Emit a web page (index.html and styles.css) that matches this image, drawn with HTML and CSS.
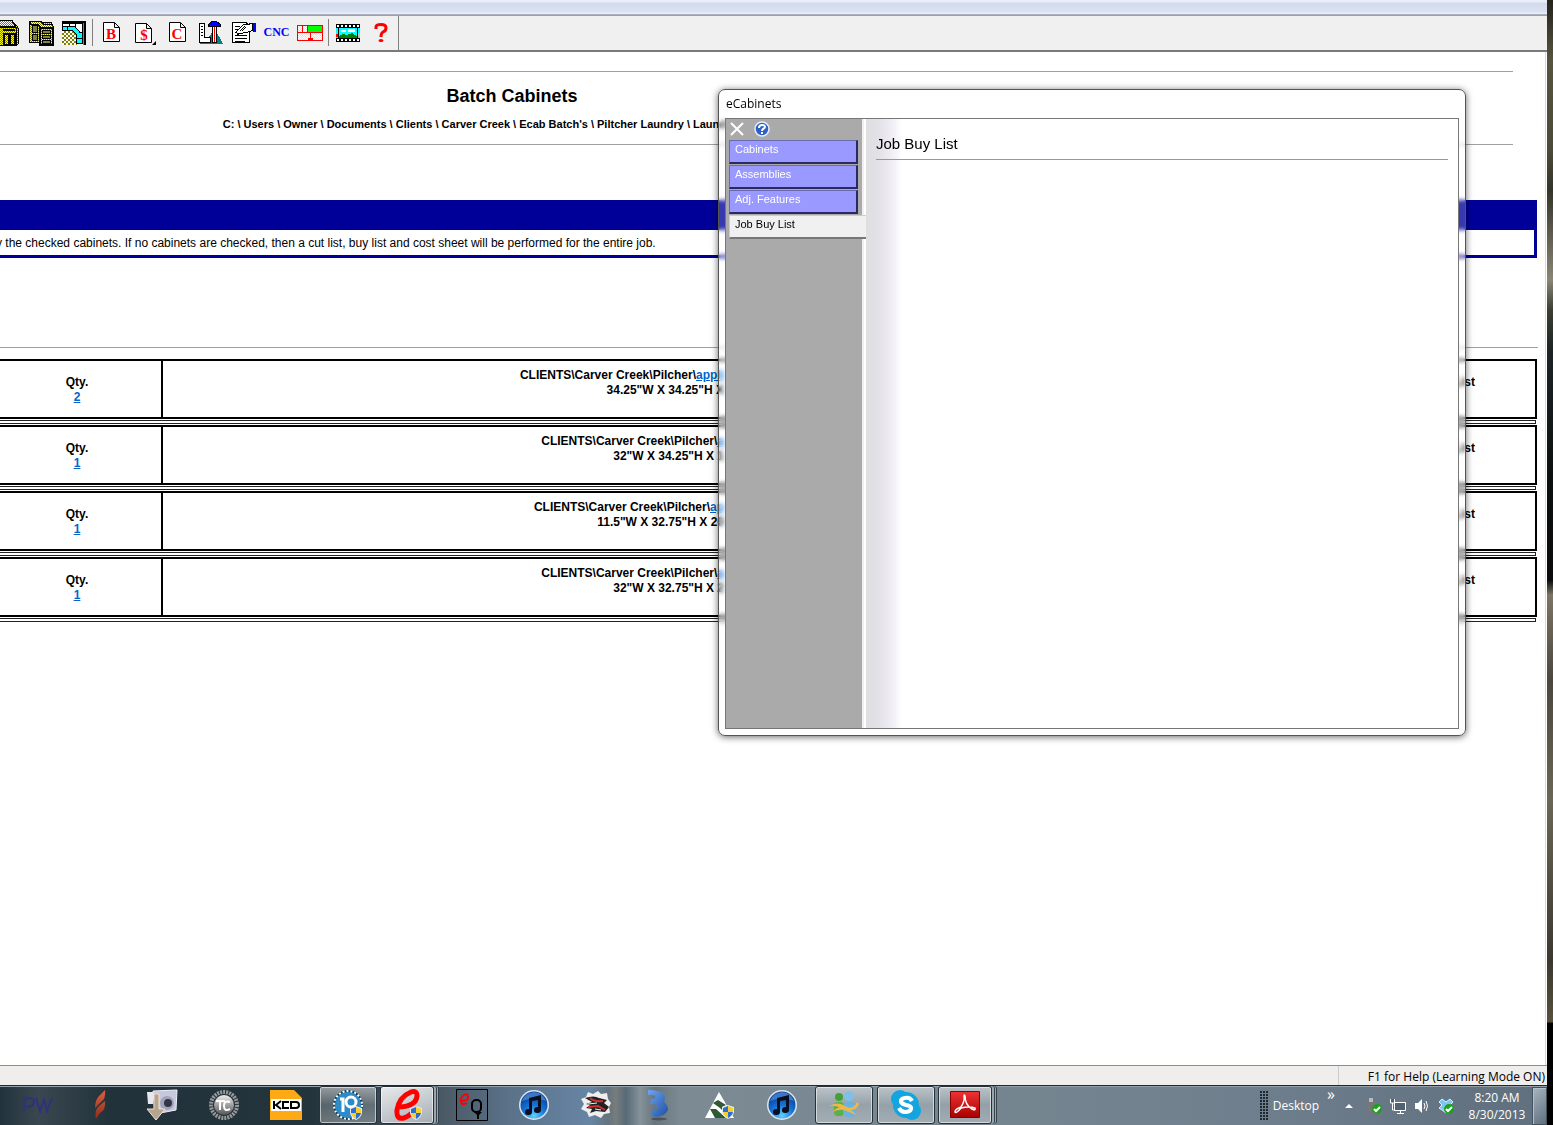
FILE: index.html
```html
<!DOCTYPE html>
<html lang="en">
<head>
<meta charset="utf-8">
<title>Batch Cabinets</title>
<link rel="stylesheet" href="styles.css">
</head>
<body>
<svg class="defs" width="0" height="0" aria-hidden="true">
  <defs>
    <pattern id="yellow" width="2" height="2" patternUnits="userSpaceOnUse"><path fill="#ff0" d="M0 0h2v2H0z"/><path fill="#808000" d="M0 0h1v1H0zM1 1h1v1H1z"/></pattern>
    <pattern id="pale" width="2" height="2" patternUnits="userSpaceOnUse"><path fill="#fff" d="M0 0h2v2H0z"/><path fill="#808000" d="M0 0h1v1H0zM1 1h1v1H1z"/></pattern>
    <pattern id="cream" width="2" height="2" patternUnits="userSpaceOnUse"><path fill="#fff" d="M0 0h2v2H0z"/><path fill="#ff0" d="M0 0h1v1H0zM1 1h1v1H1z"/></pattern>
    <pattern id="floor" width="4" height="4" patternUnits="userSpaceOnUse"><path fill="#fff" d="M0 0h4v4H0z"/><path fill="#808000" d="M0 0h2v2H0zM2 2h2v2H2z"/></pattern>
    <radialGradient id="note" cx=".5" cy=".9" r=".8"><stop offset="0" stop-color="#5fd0ff"/><stop offset=".5" stop-color="#1675d8"/><stop offset="1" stop-color="#0b3f91"/></radialGradient>
    <linearGradient id="steel" x2="0" y2="1"><stop offset="0" stop-color="#eee"/><stop offset="1" stop-color="#555"/></linearGradient>
    <linearGradient id="flame" x2="0" y2="1"><stop offset="0" stop-color="#e0603f"/><stop offset="1" stop-color="#8c2d1c"/></linearGradient>
    <linearGradient id="blue3" x2="1" y2="1"><stop offset="0" stop-color="#6ea6f0"/><stop offset="1" stop-color="#1d4fa5"/></linearGradient>
    <linearGradient id="pdf" x2="0" y2="1"><stop offset="0" stop-color="#e33"/><stop offset="1" stop-color="#a00"/></linearGradient>
    <symbol id="shield" viewBox="0 0 14 14"><path fill="#e8e8e8" d="M7 0l6 2v5q-1 5-6 7Q2 12 1 7V2z"/><path fill="#2d6fd0" d="M7 1v6H2V3zM7 7h5q-1 4-5 6z"/><path fill="#f7cf2b" d="M7 1l5 2v4H7zM2 7h5v6Q3 11 2 7z"/></symbol>
    <symbol id="itunes" viewBox="0 0 32 32"><circle cx="16" cy="16" r="15" fill="#dce6f0"/><circle cx="16" cy="16" r="13.5" fill="url(#note)"/><path fill="#5e9be6" opacity=".6" d="M4 12a12.500 12.500 0 0 1 24 0q-12-5-24 0z"/><path fill="#0a1020" d="M11 9l12-3v15a3.500 3 0 1 1-3-3v-7l-6 1v11a3.500 3 0 1 1-3-3z"/></symbol>
  </defs>
</svg>

<div class="screen">
  <header class="titlebar"></header>
  <nav class="toolbar" aria-label="Tools">
    <div class="group group-first">
      <button class="tool" aria-label="Cabinet"><svg width="26" height="26" shape-rendering="crispEdges"><path fill="url(#pale)" stroke="#000" d="M2 6.500L5 .5h12l5 6z"/><path fill="url(#yellow)" stroke="#000" d="M1.500 7.500h20v18h-20z"/><path fill="url(#yellow)" stroke="#000" d="M21.500 25.500v-18l-5-7 5 5 2 3v15z"/><path fill="none" stroke="#000" stroke-width="2" d="M9 14h5v11H9zM15 14h5v11h-5zM8 10h12"/></svg></button>
      <button class="tool" aria-label="Cabinets"><svg width="26" height="26" shape-rendering="crispEdges"><path fill="url(#yellow)" stroke="#000" d="M1.500 2.500h22v20h-22z"/><path fill="url(#pale)" stroke="#000" d="M2 1.500h11l3 3h8l2 3H13l-3-3H3z"/><path fill="#808040" stroke="#000" d="M4.500 5.500h5v7h-5zM4.500 14.500h5v6h-5z"/><path fill="url(#yellow)" stroke="#000" stroke-width="2" d="M12 8h13v17H12z"/><path fill="#808040" stroke="#000" d="M14.500 10.500h8v3h-8zM14.500 15.500h8v3h-8zM14.500 20.500h8v3h-8z"/></svg></button>
      <button class="tool" aria-label="Room layout"><svg width="24" height="24" shape-rendering="crispEdges"><path fill="url(#floor)" d="M0 9h15v15H0z"/><path fill="#808080" d="M0 0h24v24h-3V3H0z"/><path fill="#fff" stroke="#000" d="M0 2.500h20.500v19H18v-9L13 6H0zM7.500 2v4M13.500 2v4"/><path fill="#0ff" stroke="#000" d="M0 5.500h12.500l5 5v1l3 0v11h-6v-9l-4-4H0zM5.500 6v4M15 17.500h6"/><path fill="none" stroke="#000" stroke-width="2" d="M0 1h23v23"/></svg></button>
    </div>
    <div class="group">
      <button class="tool" aria-label="Buy list"><svg width="18" height="21"><path fill="#fff" stroke="#000" d="M.5.5h11l5 5v14H.5zM11.500.5v5h5"/><text x="8" y="17" class="letter">B</text></svg></button>
      <button class="tool" aria-label="Cost sheet"><svg width="22" height="24"><path fill="#fff" stroke="#000" d="M1.500 2.500h11l5 5v14h-16zM12.500 2.500v5h5"/><text x="10" y="19" class="letter">$</text><path d="M22 20v4h-4z"/></svg></button>
      <button class="tool" aria-label="Cut list"><svg width="18" height="21"><path fill="#fff" stroke="#000" d="M.5.5h11l5 5v14H.5zM11.500.5v5h5"/><text x="8" y="17" class="letter">C</text></svg></button>
      <button class="tool" aria-label="Tools"><svg width="24" height="24" shape-rendering="crispEdges"><path fill="#008080" d="M16 8l8 15H0l9-6z"/><path fill="#fff" stroke="#000" d="M.5 2.500h5v14h6v5H.5zM2 5.500h2M2 8.500h2M2 11.500h2M2 14.500h2"/><path fill="#fff" stroke="#000" d="M13.500 5.500h4v16h-4z"/><path fill="red" d="M15 6h1v15h-1z"/><path fill="#00f" stroke="#000" d="M9.500 3.500l3-3h5l4 3v2h-12z"/></svg></button>
      <button class="tool" aria-label="Properties"><svg width="24" height="23" shape-rendering="crispEdges"><path fill="#fff" stroke="#000" d="M.5 1.500h14l3 6v14H.5z"/><path fill="none" stroke="#000" d="M3 5.500h5M3 8.500h3M3 11.500h2M3 14.500h12M3 17.500h12M3 20.500h10"/><path fill="#fff" stroke="#000" d="M4.500 10.500l7-7h3l6-1v7l-6 2-7 1-2 1zM8 10l5-5M10 10l4-4"/><path fill="#00f" d="M21 2h3v9h-3z"/></svg></button>
      <button class="tool cnc">CNC</button>
      <button class="tool" aria-label="Nesting"><svg width="26" height="18" shape-rendering="crispEdges"><path fill="url(#cream)" stroke="red" d="M.5 1.500h25v15H.5z"/><path fill="#0f0" d="M11 2h14v6H11z"/><path fill="none" stroke="red" d="M0 8.500h26M5.500 2v6M10.500 2v6M13.500 9v6"/><path fill="red" d="M11 14h5v3h-5z"/></svg></button>
    </div>
    <div class="group group-last">
      <button class="tool" aria-label="Render"><svg width="24" height="18" shape-rendering="crispEdges"><path d="M0 0h24v18H0z"/><path fill="#fff" d="M1 1h2v2H1zM5 1h2v2H5zM9 1h2v2H9zM13 1h2v2h-2zM17 1h2v2h-2zM21 1h2v2h-2zM1 15h2v2H1zM5 15h2v2H5zM9 15h2v2H9zM13 15h2v2h-2zM17 15h2v2h-2zM21 15h2v2h-2z"/><path fill="#0ff" d="M0 4h24v10H0z"/><path fill="#fff" d="M5 6h5v2H5zM12 5h7v3h-7z"/><path fill="green" d="M3 12l4-2 4 1 5-2 5 3v2H3z"/><path d="M2 4h1v10H2zM21 4h1v10h-1z"/><path fill="red" d="M0 10h2v3H0z"/><path fill="#c0c0c0" d="M22 9h2v4h-2z"/></svg></button>
      <button class="tool" aria-label="Help"><svg width="14" height="20"><path fill="none" stroke="red" stroke-width="3" d="M2 6V4q0-2.500 5-2.500T12 5q0 3-3 4-2 1-2 5"/><ellipse cx="7" cy="17.500" rx="2.500" ry="1.500" fill="red"/></svg></button>
    </div>
  </nav>

  <main class="document">
    <section class="heading">
      <h1>Batch Cabinets</h1>
      <p class="path">C: \ Users \ Owner \ Documents \ Clients \ Carver Creek \ Ecab Batch's \ Piltcher Laundry \ Laund</p>
    </section>
    <section class="notice">
      <p>y the checked cabinets. If no cabinets are checked, then a cut list, buy list and cost sheet will be performed for the entire job.</p>
    </section>
    <hr>
    <table class="jobs">
      <tr><td class="qty">Qty.<br><a href="#">2</a></td><td class="desc">CLIENTS\Carver Creek\Pilcher\<a href="#">appli</a><br>34.25"W X 34.25"H X</td><td class="list">List</td></tr>
      <tr class="rule"><td colspan="3"><div></div></td></tr>
      <tr><td class="qty">Qty.<br><a href="#">1</a></td><td class="desc">CLIENTS\Carver Creek\Pilcher\<a href="#">a</a><br>32"W X 34.25"H X 1</td><td class="list">List</td></tr>
      <tr class="rule"><td colspan="3"><div></div></td></tr>
      <tr><td class="qty">Qty.<br><a href="#">1</a></td><td class="desc">CLIENTS\Carver Creek\Pilcher\<a href="#">ap</a><br>11.5"W X 32.75"H X 20</td><td class="list">List</td></tr>
      <tr class="rule"><td colspan="3"><div></div></td></tr>
      <tr><td class="qty">Qty.<br><a href="#">1</a></td><td class="desc">CLIENTS\Carver Creek\Pilcher\<a href="#">a</a><br>32"W X 32.75"H X 2</td><td class="list">List</td></tr>
      <tr class="rule"><td colspan="3"><div></div></td></tr>
    </table>
  </main>

  <footer class="status"><span>F1 for Help (Learning Mode ON)</span></footer>

  <nav class="taskbar" aria-label="Taskbar">
    <div class="tasks">
      <button class="task" aria-label="PW"><svg width="32" height="32"><path fill="none" stroke="#30307c" stroke-width="2" d="M2 23V13q0-4 5-4 5 0 5 4 0 5-8 5M14 9l4 13 4-11 3 11 5-13"/></svg></button>
      <button class="task" aria-label="Flame"><svg width="32" height="32"><path fill="url(#flame)" d="M21 1q1 9-4 12l-6 6q0-8 4-12zM21 12q1 9-5 12l-4 6q-2-9 3-13z"/></svg></button>
      <button class="task" aria-label="Pictures"><svg width="32" height="32"><path fill="#c8c8dc" stroke="#eef" d="M7 2l24-1-1 20-21 4z"/><path fill="#e7e7ee" d="M1 3h6v12H2z"/><circle cx="21" cy="14" r="7" fill="#a2a2b8"/><circle cx="22" cy="14" r="4" fill="#333645"/><path fill="#b7a48e" stroke="#eee2d4" d="M8 5h5v15h6l-9 11L1 20h7z"/></svg></button>
      <button class="task" aria-label="TC"><svg width="32" height="32"><circle cx="16" cy="16" r="13" fill="none" stroke="#999" stroke-width="4" stroke-dasharray="2 1"/><circle cx="16" cy="16" r="10" fill="url(#steel)"/><path fill="none" stroke="#fff" stroke-width="2" d="M8 12h9M12 12v9M22 13q-6-2-6 4t6 3"/></svg></button>
      <button class="task" aria-label="KCD"><svg width="32" height="32"><path fill="#ffa915" d="M0 1h24l8 8v22H0z"/><path fill="#fff" d="M1 10h30v12H1z"/><path fill="none" stroke="#000" stroke-width="2" d="M4 12v8M11 12l-5 4 5 4M19 13h-6v6h6M21 13h5q3 0 3 3t-3 3h-5z"/></svg></button>
      <button class="task open" aria-label="Version 10"><svg width="32" height="32"><circle cx="16" cy="16" r="14" fill="#2d8cc8" stroke="#133d59" stroke-width="2"/><circle cx="16" cy="16" r="14" fill="none" stroke="#fff" stroke-width="2" stroke-dasharray="2 2"/><path fill="none" stroke="#fff" stroke-width="3" d="M8 10h3v13"/><circle cx="19" cy="13" r="5" fill="none" stroke="#fff" stroke-width="3"/><use href="#shield" x="17" y="17" width="14" height="14"/></svg></button>
      <button class="task open current stack" aria-label="eCabinets"><svg width="32" height="32"><path fill="none" stroke="red" stroke-width="5" d="M9 18q16-1 17-11 0-6-6-4Q8 8 6 21q-1 10 7 8 5-2 8-5"/><use href="#shield" x="18" y="17" width="14" height="14"/></svg></button>
      <button class="task" aria-label="eQ"><svg width="32" height="32"><path fill="none" stroke="#000" d="M.5.5h31v31H.5z"/><path fill="none" stroke="red" stroke-width="2" d="M5 12q8 0 7-5-1-3-4-1-4 3-3 7 1 4 6 1"/><rect x="16" y="11" width="9" height="12" rx="4" fill="none" stroke="#000" stroke-width="2"/><path d="M18 23h8l-3 3v4h-2v-4z"/></svg></button>
      <button class="task" aria-label="iTunes"><svg width="32" height="32"><use href="#itunes"/></svg></button>
      <button class="task" aria-label="Cards"><svg width="32" height="32"><path fill="#eee" d="M8 3l5 2 5-3 3 3 6-1 1 6 3 4-2 4 1 6-6 1-3 4-6-3-6 2-2-5-6-3 3-5-3-5 5-2z"/><path fill="#222" d="M5 9q9-3 14 0l8 2-3 3 5 4-4 5-9-1-6 2 2-4-6-1 4-3-4-1 6-2z"/><path fill="none" stroke="#c33" stroke-width="2" d="M10 9q4 4 13 3M8 18l10-1 7 4"/><path stroke="#eee" d="M8 15l9-1M15 20l6 1"/></svg></button>
      <button class="task" aria-label="3D"><svg width="32" height="32"><ellipse cx="17" cy="30" rx="8" ry="1.500" opacity=".3"/><path fill="url(#blue3)" d="M6 1q12 0 16 4 2 4 0 8 4 3 4 8-3 7-15 7l-2-8q6 1 7-1 1-4-8-4l1-5q5 0 4-3-2-2-7-1z"/></svg></button>
      <button class="task" aria-label="Triangle"><svg width="32" height="32"><path fill="#fff" d="M15 3l15 26H1z"/><path fill="#2e5a35" d="M9 14l5-3 8 5-6 3zM6 20l6 0 10 9H11zM13 16h5v5z"/><use href="#shield" x="17" y="16" width="14" height="14"/></svg></button>
      <button class="task" aria-label="Music"><svg width="32" height="32"><use href="#itunes"/></svg></button>
      <button class="task open" aria-label="Messenger"><svg width="32" height="32"><circle cx="11" cy="8" r="4" fill="#46a03a"/><rect x="6" y="13" width="10" height="14" rx="4" fill="#5cb04b"/><circle cx="21" cy="7" r="5" fill="#7fc0e8"/><rect x="15" y="13" width="13" height="15" rx="5" fill="#6ab2e0"/><path fill="#f2b648" d="M1 17q9-5 16 0 8 5 12-4l2 2q-3 7-10 6 5 1 7 5-7-3-12-5-6-1-11 2 4-5 7-4-4-3-11-2z"/></svg></button>
      <button class="task open" aria-label="Skype"><svg width="32" height="32"><circle cx="10" cy="10" r="9" fill="#12a5e0"/><circle cx="22" cy="22" r="9" fill="#12a5e0"/><circle cx="16" cy="16" r="13" fill="#12a5e0"/><path fill="none" stroke="#fff" stroke-width="4" d="M22 12q-2-4-7-3-5 1-4 4 1 2 5 3 6 1 5 4-1 3-6 3-4 0-6-4"/></svg></button>
      <button class="task open stack" aria-label="Reader"><svg width="32" height="32"><path fill="url(#pdf)" stroke="#800" d="M1.500 2.500h29v26h-29z"/><path fill="none" stroke="#fff" stroke-width="1.500" d="M6 23q0-3 6-5 4-6 3-11 0-2 1 0 0 9 7 13 4 2 3-1-6-2-14 0-5 6-6 4z"/></svg></button>
    </div>
    <div class="tray">
      <span class="grip"></span>
      <span class="label">Desktop</span>
      <span class="more">»</span>
      <svg width="8" height="4" class="up"><path fill="#fff" d="M4 0l4 4H0z"/></svg>
      <svg width="16" height="16"><path fill="#bbb" d="M3 0h4v4H3z"/><path fill="#777" d="M1 4h8v8l-3 3H4l-3-3z"/><circle cx="11" cy="11" r="5" fill="#1ea01e"/><path fill="none" stroke="#fff" stroke-width="2" d="M8 11l2 2 4-4"/></svg>
      <svg width="16" height="16"><path fill="#536270" stroke="#fff" d="M4.500 4.500h11v8h-11zM7 15.500h7M10.500 13v3M.5 1v4h4V1M2.500 5v7h2"/></svg>
      <svg width="16" height="16"><path fill="#fff" d="M1 5h3l4-4v14l-4-4H1z"/><path fill="none" stroke="#fff" d="M10 5q2 3 0 6M12 3q3 5 0 10"/></svg>
      <svg width="16" height="16"><path fill="#7cc6f4" stroke="#d8f0ff" d="M4 1l4 3 4-3 3 3-3 3 3 3-3 2-4 3-4-3-3-2 3-3-3-3z"/><circle cx="11" cy="11" r="5" fill="#1ea01e"/><path fill="none" stroke="#fff" stroke-width="2" d="M8 11l2 2 4-4"/></svg>
      <div class="clock"><div>8:20 AM</div><div>8/30/2013</div></div>
      <button class="show-desktop" aria-label="Show desktop"></button>
    </div>
  </nav>

  <section class="dialog" role="dialog" aria-label="eCabinets">
    <header>eCabinets</header>
    <div class="panel">
      <aside>
        <div class="actions">
          <button aria-label="Close"><svg width="14" height="14"><path stroke="#fff" stroke-width="2" d="M1 1l12 12M13 1L1 13"/></svg></button>
          <button aria-label="Help"><svg width="16" height="16"><circle cx="8" cy="8" r="7" fill="#2c62c8" stroke="#e8eefa" stroke-width="1.500"/><path fill="none" stroke="#fff" stroke-width="2" d="M5 7q0-3 3-3t3 2q0 1-2 2-1 1-1 2M8 11v2"/></svg></button>
        </div>
        <button class="tab">Cabinets</button>
        <button class="tab">Assemblies</button>
        <button class="tab">Adj. Features</button>
        <button class="tab active">Job Buy List</button>
      </aside>
      <div class="page"><h2>Job Buy List</h2></div>
    </div>
  </section>
</div>
<div class="wallpaper"></div>
</body>
</html>
```
FILE: styles.css
```css
* { box-sizing: border-box; }
body { margin: 0; display: flex; min-height: 100vh; background: #000; color: #000; font: 12px/15px "Liberation Sans", Arial, sans-serif; }
h1, h2, p { margin: 0; }
button { margin: 0; padding: 0; border: 0; background: none; font: inherit; color: inherit; }
svg { display: block; flex: none; }
a { color: #06c; }
.defs { position: absolute; }

.screen { position: relative; flex: 1; min-width: 0; display: flex; flex-direction: column; overflow: hidden; background: #fff; }
.wallpaper { width: 6px; background: linear-gradient(#25231c, #56543f 60px, #4b4a38 150px, #34342a 190px, #8a8574 280px, #3b3f33 310px, #1c2425 350px, #0c0f10 480px, #090b0c 580px, #7c7464 595px, #4c473d 680px, #6b6555 800px, #3c382e 960px, #57503c 1022px, #000 1023px); }

.titlebar { height: 15px; border-bottom: 1px solid #a9afbb; background: linear-gradient(#e9eef7 2px, #d1d9ec 3px, #dbe2f2 12px, #f2f4f8 14px); }
.toolbar { display: flex; height: 37px; border-top: 1px solid #a0a0a0; border-bottom: 2px solid #7a7a7a; background: #f0f0f0; }
.group { display: flex; align-items: center; margin: 3px 0 4px; padding: 0 2px; border-right: 1px solid #808080; }
.group-first { margin-left: -11px; }
.group-last { margin: 0; padding: 0 1px 0 2px; }
.tool { width: 33px; height: 27px; display: flex; align-items: center; justify-content: center; }
.letter { fill: red; font: bold 15px "Liberation Serif", serif; text-anchor: middle; }
.cnc { color: #00f; font: bold 12px "Liberation Serif", serif; }

.document { flex: 1; margin: 0 1px 0 -4px; padding-right: 8px; border-right: 1px solid #d5d9e0; }
.heading { height: 74px; margin: 19px 24px 0 0; padding: 14px 0 0; border: solid #a0a0a0; border-width: 1px 0; }
h1 { padding-right: 485px; font-size: 18px; line-height: 20px; text-align: center; }
.path { margin-top: 11px; padding-right: 787px; text-align: right; font-size: 11px; font-weight: bold; white-space: nowrap; }
.notice { margin-top: 55px; padding: 6px 0 4px; border: 3px solid #009; border-top-width: 30px; border-left: 0; }
hr { margin: 89px -1px 11px 0; border: 0; border-top: 1px solid #a0a0a0; }
.jobs { width: 100%; border-collapse: separate; border-spacing: 0; table-layout: fixed; font-weight: bold; }
.jobs td { height: 60px; padding: 7px 0 0; border: solid #000; border-width: 2px 0; vertical-align: top; }
.jobs .qty { width: 167px; padding: 14px 3px 0 0; border-right-width: 2px; text-align: center; }
.jobs .desc { text-align: right; }
.jobs .list { width: 813px; padding: 14px 60px 0 0; border-right-width: 2px; text-align: right; }
.jobs .rule td { height: 6px; padding: 1px 1px 1px 0; border: 0; }
.rule div { height: 4px; border: 1px solid #222; }

.status { height: 20px; display: flex; justify-content: flex-end; border-top: 1px solid #8c8c8c; background: #f0eded; }
.status span { padding: 2px 2px 0 29px; border-left: 1px solid #ccc; font: 12px/18px "Open Sans", sans-serif; }

.taskbar { height: 40px; display: flex; justify-content: space-between; border-top: 1px solid #20272d; box-shadow: inset 0 1px #93a0aa; background: linear-gradient(90deg, #22323c, #394850 38px, #22323b 110px, #24343d 310px, #4a5864 440px, #5b7289 510px, #6685a4 590px, #64747f 608px, #777d7c 616px, #566a78 626px, #85929a 640px, #69757c 655px, #7c8b93 680px, #758590 1000px, #6f7f8d 1250px, #61717f 1500px); }
.tasks { display: flex; padding-left: 7px; }
.task { width: 58px; height: 38px; margin: 0 2px; display: flex; align-items: center; justify-content: center; }
.open { border: 1px solid #26313a; border-radius: 3px; background: linear-gradient(#ffffff80, #ffffff38 50%, #ffffff50); box-shadow: inset 0 0 0 1px #ffffff90; }
.current { background: linear-gradient(160deg, #e8eaec, #a5adb3); }
.stack { width: 54px; margin: 0 7px 0 1px; box-shadow: inset 0 0 0 1px #ffffff90, 2px 0 #9aa5ad, 3px 0 #36424b, 4px 0 #9aa5ad, 5px 0 #36424b; }
.tray { display: flex; align-items: center; color: #fff; font: 12px/17px "Open Sans", sans-serif; }
.tray > svg { margin-right: 8px; }
.grip { width: 8px; height: 30px; margin-right: 5px; background: radial-gradient(circle at 1px 1px, #1e282f 1px, transparent 1px) 0 0 / 3px 3px; }
.more { align-self: flex-start; margin: 0 10px 0 8px; font-size: 16px; line-height: 16px; }
.tray .up { margin-right: 13px; }
.clock { width: 70px; text-align: center; white-space: nowrap; }
.show-desktop { width: 15px; height: 38px; border: 1px solid #43525e; box-shadow: inset 1px 1px #b4c0ca; background: linear-gradient(135deg, #a8b4bf, #5d6f7e); }

.dialog { position: absolute; top: 89px; right: 81px; width: 748px; height: 647px; display: flex; flex-direction: column; padding: 0 6px 6px; border: 1px solid #555; border-radius: 7px; background: #ffffff38; backdrop-filter: blur(2px); box-shadow: 0 1px 7px #0009; }
.dialog header { height: 28px; padding: 6px 1px; font: 12px/16px "Open Sans", sans-serif; }
.panel { flex: 1; display: flex; border: 1px solid #777; background: #fff; }
aside { flex: none; width: 136px; padding: 0 0 0 3px; background: #aaa; }
.actions { display: flex; align-items: center; gap: 9px; height: 21px; padding-bottom: 2px; }
.actions svg { margin-left: 1px; }
.tab { display: block; width: 129px; height: 24px; margin-bottom: 1px; padding: 0 0 4px 5px; border: 1px solid #6a6ab0; border-right: 2px solid #2a2a60; border-bottom: 2px solid #2a2a60; background: #99f; color: #fff; font-size: 11px; text-align: left; }
.active { position: relative; width: 137px; border: solid #777; border-width: 1px 0 2px 1px; border-top-color: #ccc; border-left-color: #ccc; background: #f0f0f0; color: #000; }
.page { flex: 1; padding: 14px 10px 0 12px; border-left: 2px solid #f0f0f0; background: linear-gradient(90deg, #fff 2px, #dedee3 2px, #e2e1e6 14px, #f3f0f8 30px, #fff 38px); }
h2 { height: 27px; border-bottom: 1px solid #999; font-size: 15px; line-height: 22px; font-weight: normal; }
```
